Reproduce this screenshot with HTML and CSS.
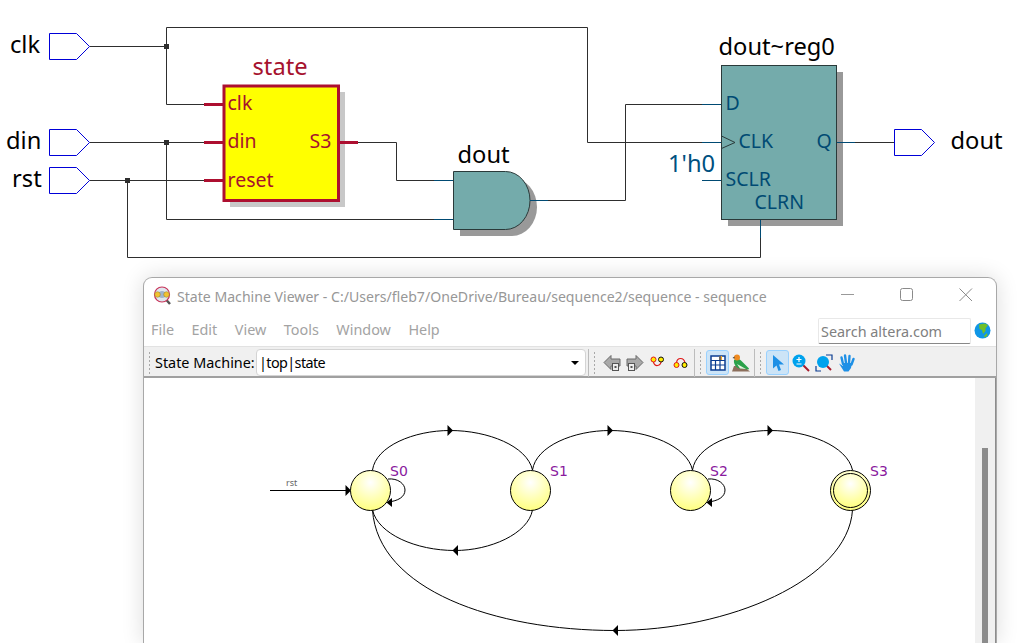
FILE: index.html
```html
<!DOCTYPE html>
<html lang="fr">
<head>
    <meta charset="UTF-8">
    <title>State Machine Viewer</title>
    <link rel="stylesheet" href="styles.css">
</head>
<body>

    <!-- RTL schematic -->
    <svg class="schematic" width="1017" height="270" viewBox="0 0 1017 270">
        <!-- wires -->
        <path class="wire" d="M89.5 46.5H166.5M166.5 104.5V27.5H587.5V142.5H702M166.5 104.5H204"/>
        <path class="wire" d="M89.5 142.5H204M166.5 142.5V219.5H434"/>
        <path class="wire" d="M89.5 180.5H204M127.5 180.5V257.5H760.5V238"/>
        <path class="wire" d="M358 142.5H396.5V180.5H434"/>
        <path class="wire" d="M548 200.5H625.5V104.5H702"/>
        <path class="wire" d="M855 142.5H894"/>
        <rect class="dot" x="164" y="44" width="5" height="5"/>
        <rect class="dot" x="164" y="140" width="5" height="5"/>
        <rect class="dot" x="125" y="178" width="5" height="5"/>

        <!-- pins -->
        <polygon class="pin" points="49.5,33.5 76.5,33.5 89.5,46.5 76.5,59.5 49.5,59.5"/>
        <polygon class="pin" points="49.5,129.5 76.5,129.5 89.5,142.5 76.5,155.5 49.5,155.5"/>
        <polygon class="pin" points="49.5,167.5 76.5,167.5 89.5,180.5 76.5,193.5 49.5,193.5"/>
        <polygon class="pin" points="894.5,129.5 921.5,129.5 934.5,142.5 921.5,155.5 894.5,155.5"/>
        <text class="label" x="10" y="52.5">clk</text>
        <text class="label" x="6" y="148.5">din</text>
        <text class="label" x="12" y="186.5">rst</text>
        <text class="label" x="950.5" y="148.5">dout</text>

        <!-- state block -->
        <rect class="shadow-light" x="230" y="92" width="115" height="115"/>
        <rect class="state-box" x="224" y="86" width="114.5" height="114.5"/>
        <path class="state-pin" d="M204 104.5H223M204 142.5H223M204 180.5H223M339 142.5H358"/>
        <text class="label label-red" x="252.5" y="74.5">state</text>
        <text class="port port-red" x="227.5" y="109.5">clk</text>
        <text class="port port-red" x="227.5" y="147.5">din</text>
        <text class="port port-red" x="227.5" y="186.5">reset</text>
        <text class="port port-red" x="309.5" y="147.5">S3</text>

        <!-- and gate -->
        <path class="shadow-dark" d="M460 178H512A25 29 0 0 1 512 236H460Z"/>
        <path class="gate" d="M453.5 171.5H505.5A24.5 29 0 0 1 505.5 229.5H453.5Z"/>
        <path class="net" d="M434 180.5H453M434 219.5H453M530 200.5H548"/>
        <text class="label" x="457.5" y="162.5">dout</text>

        <!-- register -->
        <rect class="shadow-dark" x="728" y="72" width="115" height="154"/>
        <rect class="gate" x="721.5" y="65.5" width="115" height="154"/>
        <path class="net" d="M702 104.5H721M702 142.5H721M702 180.5H721M837 142.5H855M760.5 220V238"/>
        <path class="clk-mark" d="M721.5 136L735 142.5L721.5 148.5"/>
        <text class="label" x="718.5" y="55">dout~reg0</text>
        <text class="port port-blue" x="725.5" y="109.5">D</text>
        <text class="port port-blue" x="738.5" y="147.5">CLK</text>
        <text class="port port-blue" x="816.5" y="147.5">Q</text>
        <text class="port port-blue" x="725.5" y="185.5">SCLR</text>
        <text class="port port-blue" x="754.5" y="209">CLRN</text>
        <text class="label label-blue" x="668" y="171.5">1'h0</text>
    </svg>

    <!-- State Machine Viewer window -->
    <div class="window">
        <div class="titlebar">
            <svg class="app-icon" width="20" height="20" viewBox="0 0 20 20">
                <path d="M12.5 13L17 18" stroke="#555" stroke-width="2.5"/>
                <circle cx="9" cy="8.5" r="7.5" fill="#dfe6ee" stroke="#c8345a" stroke-width="1.2"/>
                <circle cx="9" cy="8.5" r="3.5" fill="#9fb4cc"/>
                <circle cx="4.5" cy="8.5" r="2.8" fill="#f2c230" stroke="#8a7a30" stroke-width=".5"/>
                <circle cx="13.5" cy="8.5" r="2.8" fill="#f2c230" stroke="#8a7a30" stroke-width=".5"/>
            </svg>
            <span class="title">State Machine Viewer - C:/Users/fleb7/OneDrive/Bureau/sequence2/sequence - sequence</span>
            <div class="win-controls">
                <svg width="14" height="14" viewBox="0 0 14 14"><path d="M0 6.5H13" stroke="#999"/></svg>
                <svg width="14" height="14" viewBox="0 0 14 14"><rect x=".5" y=".5" width="12" height="12" rx="2" fill="none" stroke="#8a8a8a"/></svg>
                <svg width="14" height="14" viewBox="0 0 14 14"><path d="M.5 .5L13 13M13 .5L.5 13" stroke="#8a8a8a"/></svg>
            </div>
        </div>

        <div class="menubar">
            <span class="menu-item">File</span>
            <span class="menu-item">Edit</span>
            <span class="menu-item">View</span>
            <span class="menu-item">Tools</span>
            <span class="menu-item">Window</span>
            <span class="menu-item">Help</span>
            <div class="search-box">Search altera.com</div>
            <svg class="globe" width="17" height="17" viewBox="0 0 17 17">
                <circle cx="8.5" cy="8.5" r="8" fill="#0f96e6"/>
                <path d="M5 2.5L11 1.5L14 3L11.5 6.5L11.5 9L9 12L8 8L5.5 7Z" fill="#6fbf2a"/>
                <path d="M10 14L13 11L13.5 13.5L11 15.5Z" fill="#6fbf2a"/>
            </svg>
        </div>

        <div class="toolbar">
            <span class="grip"></span>
            <span class="combo-label">State Machine:</span>
            <div class="combo">
                <span class="combo-value">|top|state</span>
                <span class="combo-arrow"></span>
            </div>

            <span class="tool-sep"></span>
            <span class="grip"></span>
            <span class="tool">
                <svg width="18" height="18" viewBox="0 0 18 18">
                    <path d="M1 8.5L8 1.5V5H17V12H8V15.500Z" fill="#a9a9a9" stroke="#6a6a6a"/>
                    <rect x="9.5" y="9.5" width="6" height="7" fill="#eee" stroke="#555"/>
                    <rect x="11.5" y="12" width="2" height="2" fill="#555"/>
                </svg>
            </span>
            <span class="tool">
                <svg width="18" height="18" viewBox="0 0 18 18">
                    <path d="M17 8.5L10 1.5V5H1V12H10V15.500Z" fill="#a9a9a9" stroke="#6a6a6a"/>
                    <rect x="2.5" y="9.5" width="6" height="7" fill="#eee" stroke="#555"/>
                    <rect x="4.5" y="12" width="2" height="2" fill="#555"/>
                </svg>
            </span>
            <span class="tool">
                <svg width="18" height="18" viewBox="0 0 18 18">
                    <path d="M4.5 8C5 13 12 13 12.5 6" fill="none" stroke="#e01818" stroke-width="1.2"/>
                    <circle cx="4.5" cy="5.5" r="2.5" fill="#ffee00" stroke="#e01818"/>
                    <circle cx="12" cy="5.5" r="2.5" fill="#ffee00" stroke="#111"/>
                </svg>
            </span>
            <span class="tool">
                <svg width="18" height="18" viewBox="0 0 18 18">
                    <path d="M4.5 9C5 3 12 3 13 9" fill="none" stroke="#e01818" stroke-width="1.2"/>
                    <circle cx="4.5" cy="11" r="2.5" fill="#ffee00" stroke="#e01818"/>
                    <circle cx="12.5" cy="11" r="2.5" fill="#ffee00" stroke="#111"/>
                </svg>
            </span>

            <span class="tool-sep"></span>
            <span class="grip"></span>
            <span class="tool tool-active">
                <svg width="16" height="16" viewBox="0 0 16 16">
                    <rect x="1" y="1" width="14" height="14" fill="#fff" stroke="#0b3d91" stroke-width="1.5"/>
                    <rect x="9" y="1" width="3" height="4" fill="#f5a623"/>
                    <path d="M1 5.5H15M1 10H15M5.5 5.5V15M10 1V15" stroke="#0b3d91" stroke-width="1.2"/>
                </svg>
            </span>
            <span class="tool">
                <svg width="18" height="18" viewBox="0 0 18 18">
                    <path d="M0 17.500L2 12H11L18 17.500Z" fill="#8c6f5c"/>
                    <path d="M2 6C4 4 7 4.500 9.500 7L17 14.500L16.500 15.500L7 14.500C3 13 1.500 9 2 6Z" fill="#2aa24a"/>
                    <path d="M5 10L14 15L8 14.500Z" fill="#e8f0e0"/>
                    <circle cx="5" cy="3.500" r="3" fill="#ef8a1f"/>
                    <path d="M2.500 2.500L.5 4L2.500 4.500Z" fill="#333"/>
                </svg>
            </span>

            <span class="tool-sep"></span>
            <span class="grip"></span>
            <span class="tool tool-active">
                <svg width="16" height="18" viewBox="0 0 16 18">
                    <path d="M3 1L14 10.5H9L11 16L8.5 17L6.5 11.5L3 14.5Z" fill="#1e90e6"/>
                </svg>
            </span>
            <span class="tool">
                <svg width="18" height="18" viewBox="0 0 18 18">
                    <path d="M11 11L17 17" stroke="#a81c2c" stroke-width="2"/>
                    <circle cx="7" cy="7" r="6.5" fill="#00a2ed"/>
                    <path d="M4.5 5.5H9.5M7 3V8M4.5 10H9.5" stroke="#fff" stroke-width="1.2"/>
                </svg>
            </span>
            <span class="tool">
                <svg width="18" height="18" viewBox="0 0 18 18">
                    <path d="M11 1H17V6M1 12V17H6" fill="none" stroke="#0b3d91" stroke-width="1.2"/>
                    <path d="M11 11L16 16" stroke="#a81c2c" stroke-width="2"/>
                    <circle cx="8" cy="8" r="6" fill="#00a2ed"/>
                </svg>
            </span>
            <span class="tool">
                <svg width="18" height="18" viewBox="0 0 18 18">
                    <path d="M5 10L3.5 3.5M8 9L7 1.5M11 9L11.5 2M13.500 10.500L15.500 5" stroke="#1e90e6" stroke-width="2.400" stroke-linecap="round"/>
                    <path d="M1 9.500L5 12V9H14L13 14L10.500 17.500H6L1 9.500Z" fill="#1e90e6"/>
                </svg>
            </span>
        </div>

        <div class="viewer">
            <svg class="state-diagram" width="831" height="265" viewBox="144 378 831 265">
                <defs>
                    <radialGradient id="bubble" cx="50%" cy="30%" r="70%">
                        <stop offset="0" stop-color="#ffffff"/>
                        <stop offset="1" stop-color="#ffff80"/>
                    </radialGradient>
                </defs>

                <!-- transitions -->
                <path class="edge" d="M372.5 470C376 446 414 430.5 450 430.5C488 430.5 527 446 532.5 470"/>
                <path class="edge" d="M532.5 470C536 446 574 430.5 610 430.5C648 430.5 687 446 692.5 470"/>
                <path class="edge" d="M692.5 470C696 446 734 430.5 770 430.5C808 430.5 847 446 852.5 470"/>
                <path class="edge" d="M532.5 510C528 534 490 550.5 455 550.5C416 550.5 378 534 372.5 510"/>
                <path class="edge" d="M852.5 510C848 580 728 630.5 615 630.5C495 630.5 378 590 372.5 510"/>
                <path class="edge" d="M388 479C398 478 405 484 405 490C405 497 398 501 388 502"/>
                <path class="edge" d="M708 479C718 478 725 484 725 490C725 497 718 501 708 502"/>
                <path class="edge" d="M270 490.5H346"/>

                <polygon class="arrow" points="447.5,425 453,430.5 447.5,436"/>
                <polygon class="arrow" points="607.5,425 613,430.5 607.5,436"/>
                <polygon class="arrow" points="767.5,425 773,430.5 767.5,436"/>
                <polygon class="arrow" points="458,545 452.5,550.5 458,556"/>
                <polygon class="arrow" points="618,625 612.5,630.5 618,636"/>
                <polygon class="arrow" points="392,498 386.5,502.5 392,507"/>
                <polygon class="arrow" points="712,498 706.5,502.5 712,507"/>
                <polygon class="arrow" points="345.5,485 351,490.5 345.5,496"/>

                <!-- states -->
                <circle class="node" cx="370.5" cy="490.5" r="20"/>
                <circle class="node" cx="530.5" cy="490.5" r="20"/>
                <circle class="node" cx="690.5" cy="490.5" r="20"/>
                <circle class="node" cx="850.5" cy="490.5" r="20"/>
                <circle class="node" cx="850.5" cy="490.5" r="17"/>

                <text class="state-name" x="390" y="476">S0</text>
                <text class="state-name" x="550" y="476">S1</text>
                <text class="state-name" x="710" y="476">S2</text>
                <text class="state-name" x="870" y="476">S3</text>
                <text class="rst-label" x="286" y="486">rst</text>
            </svg>
            <div class="scrollbar">
                <div class="scroll-thumb"></div>
            </div>
        </div>
    </div>

</body>
</html>
```

FILE: styles.css
```css
html, body {
    height: 643px;
}

body {
    margin: 0;
    background-color: white;
    overflow: hidden;
    font-family: "Noto Sans", sans-serif;
}

.schematic {
    display: block;
}

/* schematic parts */
.wire {
    fill: none;
    stroke: #2e2e2e;
    stroke-width: 1;
}

.dot {
    fill: #2e2e2e;
}

.pin {
    fill: white;
    stroke: #0000d8;
    stroke-width: 1;
}

.net {
    fill: none;
    stroke: #004a73;
    stroke-width: 1;
}

.state-pin {
    fill: none;
    stroke: #ad0f30;
    stroke-width: 3;
}

.state-box {
    fill: #ffff00;
    stroke: #ad0f30;
    stroke-width: 3;
}

.shadow-light {
    fill: #c8c8c8;
}

.shadow-dark {
    fill: #999999;
}

.gate {
    fill: #74abab;
    stroke: #2a3a3a;
    stroke-width: 1;
}

.clk-mark {
    fill: none;
    stroke: #2a3a3a;
    stroke-width: 1;
}

.label {
    font-size: 23.7px;
    fill: black;
}

.label-red {
    fill: #a6122e;
}

.label-blue {
    fill: #00507f;
}

.port {
    font-size: 19.5px;
}

.port-red {
    fill: #a6122e;
}

.port-blue {
    fill: #004a73;
}

/* window */
.window {
    position: absolute;
    left: 143px;
    top: 277px;
    width: 854px;
    height: 366px;
    box-sizing: border-box;
    display: flex;
    flex-direction: column;
    background-color: white;
    border: 1px solid #a8a8a8;
    border-bottom: none;
    border-radius: 9px 9px 0 0;
    box-shadow: 0 0 22px rgba(0, 0, 0, 0.14);
    font-size: 14.4px;
}

.titlebar {
    height: 37px;
    display: flex;
    align-items: center;
    padding-left: 9px;
}

.app-icon {
    margin-top: -2px;
}

.title {
    margin-left: 4px;
    font-size: 14.1px;
    color: #979797;
    white-space: nowrap;
}

.win-controls {
    margin-left: auto;
    margin-right: 23px;
    display: flex;
    gap: 45px;
    margin-top: -3px;
}

.menubar {
    height: 31px;
    display: flex;
    align-items: center;
    padding-left: 7px;
}

.menu-item {
    color: #a3a3a3;
    margin-top: -3px;
    margin-right: 17.5px;
}

.search-box {
    margin-left: auto;
    width: 153px;
    height: 26px;
    box-sizing: border-box;
    padding-left: 2px;
    line-height: 26px;
    color: #808080;
    border: 1px solid #e8e8e8;
    border-bottom: 1px solid #888;
    border-radius: 2px;
    white-space: nowrap;
}

.globe {
    margin: 0 5px 0 3px;
}

.toolbar {
    height: 32px;
    box-sizing: border-box;
    display: flex;
    align-items: center;
    padding-left: 4px;
    padding-top: 2px;
    background-color: #f0f0f0;
    border-top: 1px solid #e2e2e2;
    border-bottom: 2px solid #a0a0a0;
    color: black;
}

.grip {
    width: 3px;
    height: 24px;
    margin-left: 4.5px;
    margin-right: 4px;
    background-image: radial-gradient(circle, #a8a8a8 1px, transparent 1px);
    background-size: 3px 4px;
}

.toolbar .grip:first-child {
    margin-left: 0;
}

.combo-label {
    width: 100px;
    white-space: nowrap;
}

.combo {
    width: 330px;
    height: 27px;
    margin-left: 1px;
    box-sizing: border-box;
    display: flex;
    align-items: center;
    justify-content: space-between;
    padding: 0 3px 0 2px;
    background-color: white;
    border: 1px solid #d4d4d4;
    border-radius: 4px;
}

.combo-value {
    letter-spacing: -0.6px;
}

.combo-arrow {
    width: 0;
    height: 0;
    margin-right: 3px;
    border-left: 4px solid transparent;
    border-right: 4px solid transparent;
    border-top: 4px solid black;
}

.tool-sep {
    width: 1px;
    height: 28px;
    margin-left: 1.5px;
    background-color: #bcbcbc;
}

.tool {
    width: 23px;
    height: 25px;
    box-sizing: border-box;
    display: flex;
    align-items: center;
    justify-content: center;
    border: 1px solid transparent;
    border-radius: 3px;
}

.tool-active {
    background-color: #cce4f7;
    border-color: #99d1ff;
}

/* diagram */
.viewer {
    flex: 1;
    display: flex;
    overflow: hidden;
}

.state-diagram {
    display: block;
    flex-shrink: 0;
}

.edge {
    fill: none;
    stroke: black;
    stroke-width: 1;
}

.arrow {
    fill: black;
}

.node {
    fill: url(#bubble);
    stroke: black;
    stroke-width: 1;
}

.state-name {
    font-family: "DejaVu Sans", sans-serif;
    font-size: 14px;
    fill: #8a1a9e;
}

.rst-label {
    font-size: 9px;
    fill: #666;
}

.scrollbar {
    width: 20px;
    background-color: #f0f0f0;
    border-right: 1px solid #8c8c8c;
    padding-top: 70px;
}

.scroll-thumb {
    width: 6px;
    height: 300px;
    margin-left: 7px;
    background-color: #8c8c8c;
}
```
